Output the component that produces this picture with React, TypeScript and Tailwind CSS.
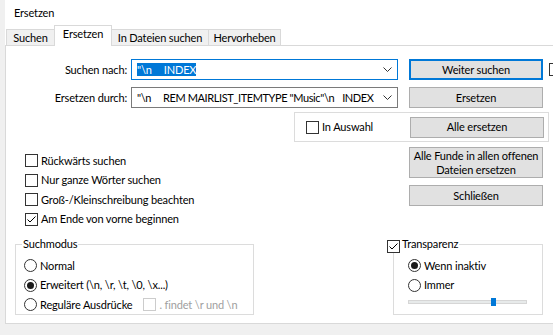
import React from "react";

function Check({ checked = false, disabled = false }: { checked?: boolean; disabled?: boolean }) {
  return (
    <span
      className={
        disabled
          ? "flex h-[13px] w-[13px] shrink-0 items-center justify-center border border-[#cccccc] bg-white"
          : "flex h-[13px] w-[13px] shrink-0 items-center justify-center border border-[#333333] bg-white"
      }
    >
      {checked && (
        <svg width="11" height="11" viewBox="0 0 11 11">
          <path d="M1.5 5.5 L4 8 L9.5 2.5" fill="none" stroke="#000" strokeWidth="1" />
        </svg>
      )}
    </span>
  );
}

function Radio({ checked = false }: { checked?: boolean }) {
  return (
    <span className="flex h-[13px] w-[13px] shrink-0 items-center justify-center rounded-full border border-[#333333] bg-white">
      {checked && <span className="h-[7px] w-[7px] rounded-full bg-[#1a1a1a]" />}
    </span>
  );
}

function Btn({ children, primary = false, tall = false }: { children: React.ReactNode; primary?: boolean; tall?: boolean }) {
  const size = tall ? "h-[31px]" : "h-[21px]";
  const edge = primary ? "border-2 border-[#0078d7]" : "border border-[#adadad]";
  return (
    <button
      type="button"
      className={`flex w-[134px] shrink-0 items-center justify-center whitespace-nowrap bg-[#e1e1e1] text-center leading-[14px] ${size} ${edge}`}
    >
      {children}
    </button>
  );
}

function Chevron() {
  return (
    <svg width="9" height="5" viewBox="0 0 9 5" className="shrink-0">
      <path d="M0.5 0.5 L4.5 4.5 L8.5 0.5" fill="none" stroke="#333" strokeWidth="1" />
    </svg>
  );
}

function Row({ children }: { children: React.ReactNode }) {
  return <div className="flex h-[19.5px] items-center gap-[3px] whitespace-nowrap">{children}</div>;
}

export default function App() {
  return (
    <div className="flex h-[335px] w-[553px] overflow-hidden bg-white font-['Lato',sans-serif] text-[11px] leading-[14px] tracking-[-0.15px] text-black">
      <div className="w-[5px] shrink-0 bg-[#f0f0f0]" />
      <div className="flex min-w-0 flex-1 flex-col">
        <div className="flex h-[25px] shrink-0 items-center pl-[9px]">Ersetzen</div>

        {/* tabs */}
        <div className="flex h-[20px] shrink-0 items-end pl-px whitespace-nowrap">
          <div className="flex h-[16px] w-[48px] items-center justify-center border-l border-t border-[#d9d9d9] bg-[#f0f0f0]">
            Suchen
          </div>
          <div className="relative z-10 -mb-px flex h-[21px] w-[58px] justify-center border-x border-t border-[#d9d9d9] bg-white pt-px">
            Ersetzen
          </div>
          <div className="flex h-[16px] w-[97px] items-center justify-center border-r border-t border-[#d9d9d9] bg-[#f0f0f0]">
            In Dateien suchen
          </div>
          <div className="flex h-[16px] w-[72px] items-center justify-center border-r border-t border-[#d9d9d9] bg-[#f0f0f0]">
            Hervorheben
          </div>
        </div>

        {/* tab page */}
        <div className="flex h-[279px] shrink-0 flex-col border-y border-l border-[#d9d9d9]">
          <div className="mt-[13px] flex h-[21px] items-center">
            <span className="w-[121px] shrink-0 text-right">Suchen nach:</span>
            <div className="ml-[4px] flex h-full w-[267px] shrink-0 items-center border border-[#0078d7] bg-white px-[5px]">
              <span className="flex flex-1 items-center whitespace-pre">
                <span className="bg-[#0078d7] leading-[13px] text-white">
                  {'"\\n'}
                  <span className="inline-block w-[12px]" />
                  INDEX
                </span>
              </span>
              <Chevron />
            </div>
            <div className="ml-[11px] h-full">
              <Btn primary>Weiter suchen</Btn>
            </div>
            <span className="ml-[6px] h-[13px] w-[13px] shrink-0 border border-[#333333]" />
          </div>

          <div className="mt-[7px] flex h-[21px] items-center">
            <span className="w-[121px] shrink-0 text-right">Ersetzen durch:</span>
            <div className="ml-[4px] flex h-full w-[267px] shrink-0 items-center border border-[#7a7a7a] bg-white px-[5px]">
              <span className="flex-1 overflow-hidden whitespace-pre tracking-[-0.4px]">
                {'"\\n'}
                <span className="inline-block w-[12px]" />
                {'REM MAIRLIST_ITEMTYPE "Music"\\n'}
                <span className="inline-block w-[8px]" />
                INDEX
              </span>
              <Chevron />
            </div>
            <div className="ml-[11px] h-full">
              <Btn>Ersetzen</Btn>
            </div>
          </div>

          <div className="ml-[288px] mt-[4px] flex h-[30px] w-[255px] shrink-0 items-center border border-[#dcdcdc] pl-[11px]">
            <Check />
            <span className="ml-[3px]">In Auswahl</span>
            <div className="ml-auto mr-[4px]">
              <Btn>Alle ersetzen</Btn>
            </div>
          </div>

          <div className="flex h-[95px] shrink-0">
            <div className="flex w-[403px] shrink-0 flex-col pl-[19px] pt-[9px]">
              <Row>
                <Check />
                <span>Rückwärts suchen</span>
              </Row>
              <Row>
                <Check />
                <span>Nur ganze Wörter suchen</span>
              </Row>
              <Row>
                <Check />
                <span>Groß-/Kleinschreibung beachten</span>
              </Row>
              <Row>
                <Check checked />
                <span>Am Ende von vorne beginnen</span>
              </Row>
            </div>
            <div className="flex flex-col gap-[7px] pt-[5px]">
              <Btn tall>
                Alle Funde in allen offenen
                <br />
                Dateien ersetzen
              </Btn>
              <Btn>Schließen</Btn>
            </div>
          </div>

          <div className="ml-[9px] flex items-start">
            <fieldset className="h-[78px] w-[239px] shrink-0 border border-[#dcdcdc]">
              <legend className="ml-[6px] px-px leading-[14px]">Suchmodus</legend>
              <div className="flex flex-col pl-[8px] pt-[5px]">
                <Row>
                  <Radio />
                  <span>Normal</span>
                </Row>
                <Row>
                  <Radio checked />
                  <span>{"Erweitert (\\n, \\r, \\t, \\0, \\x...)"}</span>
                </Row>
                <Row>
                  <Radio />
                  <span>Reguläre Ausdrücke</span>
                  <span className="ml-[8px]">
                    <Check disabled />
                  </span>
                  <span className="text-[#a0a0a0]">{". findet \\r und \\n"}</span>
                </Row>
              </div>
            </fieldset>

            <fieldset className="ml-[139px] h-[78px] w-[150px] shrink-0 border border-[#dcdcdc]">
              <legend className="-ml-[7px] flex h-[14px] items-center pr-px">
                <span className="mt-[4px]">
                  <Check checked />
                </span>
                <span className="ml-[2px]">Transparenz</span>
              </legend>
              <div className="flex flex-col pl-[14px] pt-[5px]">
                <Row>
                  <Radio checked />
                  <span>Wenn inaktiv</span>
                </Row>
                <Row>
                  <Radio />
                  <span>Immer</span>
                </Row>
                <div className="relative mt-[5px] h-[4px] w-[119px] border border-[#d6d6d6] bg-[#e7eaea]">
                  <span className="absolute left-[82px] top-[-3px] h-[8px] w-[5px] bg-[#0078d7]" />
                </div>
              </div>
            </fieldset>
          </div>
        </div>

        <div className="flex-1 bg-[#f0f0f0]" />
      </div>
    </div>
  );
}
